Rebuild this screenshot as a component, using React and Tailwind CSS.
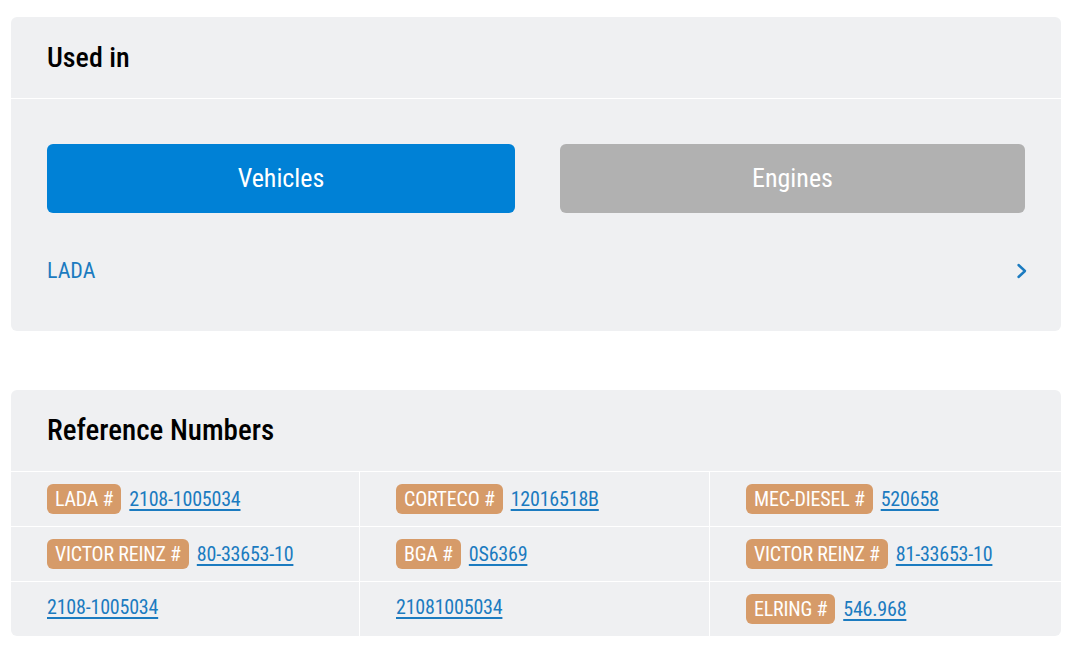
const refs = [
  { brand: "LADA", num: "2108-1005034" },
  { brand: "CORTECO", num: "12016518B" },
  { brand: "MEC-DIESEL", num: "520658" },
  { brand: "VICTOR REINZ", num: "80-33653-10" },
  { brand: "BGA", num: "0S6369" },
  { brand: "VICTOR REINZ", num: "81-33653-10" },
  { brand: null, num: "2108-1005034" },
  { brand: null, num: "21081005034" },
  { brand: "ELRING", num: "546.968" },
];

function RefCell({ item, col, row }) {
  return (
    <div
      className={`flex h-[55px] items-center gap-2 border-t border-white pl-9 ${
        col < 2 ? "border-r" : ""
      } ${row === 2 && !item.brand ? "pb-1" : ""}`}
    >
      {item.brand && (
        <span className="rounded-md bg-[#d69b69] px-2 py-[1px] text-[20px] leading-[28px] tracking-[-0.2px] text-white">
          {item.brand} #
        </span>
      )}
      <a
        href="#"
        className="text-[20px] tracking-[-0.2px] text-[#1b7bc0] underline decoration-[1.5px] underline-offset-[3px]"
      >
        {item.num}
      </a>
    </div>
  );
}

export default function App() {
  return (
    <div className="min-h-[670px] bg-white px-[11px] pt-[17px] font-['Roboto_Condensed',sans-serif]">
      <section className="rounded-md bg-[#eff0f2]">
        <div className="flex h-[82px] items-center border-b border-white px-9">
          <h2 className="text-[28px] font-medium leading-none text-black">Used in</h2>
        </div>
        <div className="px-9 pt-[45px] pb-[44px]">
          <div className="flex gap-[45px]">
            <button className="h-[69px] w-[468px] rounded-md bg-[#0081d6] text-[26px] text-white">
              Vehicles
            </button>
            <button className="h-[69px] flex-1 rounded-md bg-[#b1b1b1] text-[26px] text-white">
              Engines
            </button>
          </div>
          <div className="mt-[41px] flex items-center justify-between">
            <span className="text-[22px] text-[#1b7bc0]">LADA</span>
            <svg
              viewBox="0 0 12 16"
              className="mr-[-3px] h-4 w-3 text-[#1b7bc0]"
              fill="none"
              stroke="currentColor"
              strokeWidth="2.4"
              strokeLinecap="round"
              strokeLinejoin="round"
            >
              <polyline points="2.5,2 9,8 2.5,14" />
            </svg>
          </div>
        </div>
      </section>

      <section className="mt-[59px] overflow-hidden rounded-md bg-[#eff0f2]">
        <div className="flex h-[81px] items-center px-9">
          <h2 className="text-[29px] font-medium leading-none text-black">Reference Numbers</h2>
        </div>
        <div className="grid grid-cols-[349px_350px_1fr]">
          {refs.map((item, i) => (
            <RefCell key={i} item={item} col={i % 3} row={Math.floor(i / 3)} />
          ))}
        </div>
      </section>
    </div>
  );
}
